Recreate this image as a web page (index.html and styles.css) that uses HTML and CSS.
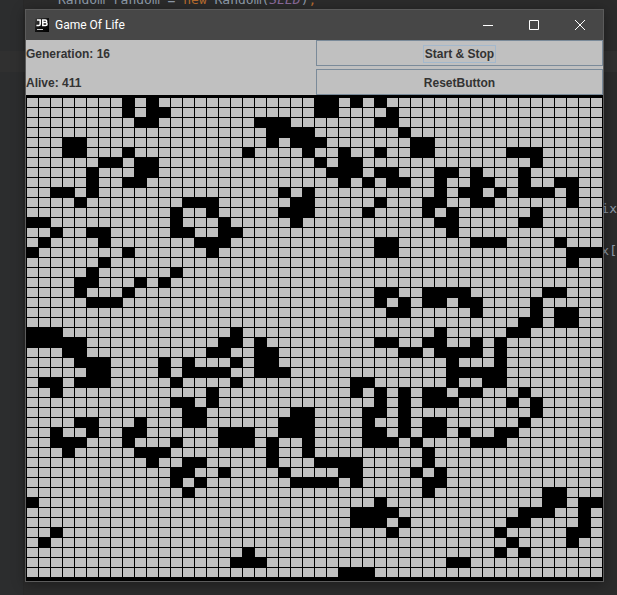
FILE: index.html
```html
<!DOCTYPE html>
<html lang="en">
<head>
<meta charset="utf-8">
<title>Game Of Life</title>
<link rel="stylesheet" href="styles.css">
</head>
<body>
<div class="editor" aria-hidden="true">
  <div class="gutter"></div>
  <div class="current-line"></div>
  <code class="code code-top">Random random = <span class="keyword">new</span> Random(<span class="constant">SEED</span>)<span class="keyword">;</span></code>
  <code class="code code-upper">ix</code>
  <code class="code code-lower">x[</code>
</div>
<main class="window">
  <header class="titlebar">
    <svg class="logo" viewBox="0 0 14 14" aria-hidden="true">
      <defs><linearGradient id="logo-fill" x1="0" y1="0" x2="1" y2="1"><stop offset="0" stop-color="#444"/><stop offset=".5" stop-color="#111"/><stop offset="1" stop-color="#000"/></linearGradient></defs>
      <rect width="14" height="14" fill="url(#logo-fill)"/>
      <path d="M2 2h3.2v4q0 1.5-1.4 1.5H1.4M7.8 7.5V2h2.5q1.4 0 1.4 1.3t-1.4 1.3H7.8h2.7q1.6 0 1.6 1.45t-1.6 1.45z" fill="none" stroke="#fff" stroke-width="1.5"/>
      <path d="M2 11.5h6" stroke="#ccc" stroke-width="1"/>
    </svg>
    <h1 class="title">Game Of Life</h1>
    <button class="control" type="button" aria-label="Minimize"><svg viewBox="0 0 10 10"><path d="M0 5.5h10"/></svg></button>
    <button class="control" type="button" aria-label="Maximize"><svg viewBox="0 0 10 10"><path d="M.5.5h9v9h-9z"/></svg></button>
    <button class="control" type="button" aria-label="Close"><svg viewBox="0 0 10 10"><path d="M0 0l10 10M10 0L0 10"/></svg></button>
  </header>
  <section class="panel">
    <p class="label">Generation: 16</p>
    <button class="action" type="button"><span class="focus">Start &amp; Stop</span></button>
    <p class="label">Alive: 411</p>
    <button class="action" type="button">ResetButton</button>
  </section>
  <div class="board" id="board" role="img" aria-label="Cells"></div>
</main>
<script src="board.js"></script>
</body>
</html>
```
FILE: styles.css
```css
* {
  box-sizing: border-box;
}

body {
  margin: 0;
  padding: 9px 13px 13px 25px;
  background: #2b2b2b;
  font-family: "Liberation Sans", Arial, sans-serif;
}

.editor {
  position: absolute;
  inset: 0;
  overflow: hidden;
}

.gutter {
  position: absolute;
  inset: 0 auto 0 0;
  width: 24px;
  background: #2c2d2e;
  border-right: 1px solid #292929;
}

.current-line {
  position: absolute;
  top: 51px;
  left: 0;
  right: 0;
  height: 21px;
  background: #303030;
}

.code {
  position: absolute;
  font: 13px/16px "DejaVu Sans Mono", monospace;
  color: #8d9aa8;
  white-space: pre;
}

.code-top {
  top: -8px;
  left: 58px;
}

.code-upper {
  top: 201px;
  right: 0;
}

.code-lower {
  top: 243px;
  right: 0;
}

.keyword {
  color: #b86c2e;
}

.constant {
  color: #8a6a9b;
  font-style: italic;
}

.window {
  position: relative;
  border: 1px solid #5b5b5b;
  background: #c0c0c0;
  box-shadow: 0 2px 12px rgba(0, 0, 0, 0.35);
}

.titlebar {
  display: flex;
  align-items: center;
  height: 30px;
  padding-left: 9px;
  background: #474747;
  color: #fff;
}

.logo {
  width: 14px;
  height: 14px;
}

.title {
  flex: 1;
  margin: 0 0 0 6px;
  font: 400 12px/16px Roboto, sans-serif;
}

.control {
  display: flex;
  align-items: center;
  justify-content: center;
  width: 46px;
  height: 28px;
  padding: 0;
  border: 0;
  background: none;
}

.control svg {
  width: 10px;
  height: 10px;
  fill: none;
  stroke: #fff;
  stroke-width: 1;
}

.panel {
  display: grid;
  grid-template-columns: 1fr 1fr;
  grid-auto-rows: 26px;
  gap: 3px;
  color: #333;
  font-size: 12px;
  font-weight: 700;
}

.label {
  margin: 0;
  line-height: 28px;
}

.action {
  padding: 2px 0 0;
  border: 1px solid #7a8a99;
  background: #c0c0c0;
  color: #333;
  font: inherit;
}

.focus {
  display: inline-block;
  padding: 1px;
  outline: 1px solid #a3b8cc;
}

.board {
  display: grid;
  grid-template-columns: repeat(48, 1fr);
  grid-auto-rows: 9px;
  gap: 1px;
  padding: 3px 1px 4px;
  background: #000;
}

.cell {
  background: #c0c0c0;
}

.alive {
  background: #000;
}
```
FILE: board.js
```js
const SIZE = 48;

// Columns of the living cells, one list for each row.
const rows = [
  [8, 10, 24, 25, 27, 29],
  [8, 10, 11, 24, 25, 30],
  [9, 10, 19, 20, 21, 29, 30],
  [20, 21, 22, 23, 31],
  [3, 4, 20, 22, 23, 24, 32, 33],
  [3, 4, 8, 18, 23, 26, 29, 32, 33, 40, 41, 42],
  [6, 7, 9, 10, 24, 26, 27, 42],
  [5, 9, 10, 25, 26, 27, 29, 30, 34, 35, 37, 41],
  [5, 8, 9, 26, 28, 30, 31, 34, 37, 38, 41, 44, 45],
  [2, 3, 5, 21, 23, 34, 36, 37, 39, 41, 42, 43, 45],
  [4, 13, 14, 15, 22, 23, 29, 33, 34, 37, 38, 45],
  [12, 15, 21, 22, 23, 28, 33, 35, 42],
  [0, 1, 12, 16, 22, 34, 35, 41, 42],
  [2, 5, 6, 12, 13, 16, 17, 35],
  [1, 6, 14, 15, 16, 29, 30, 37, 38, 39, 44],
  [0, 8, 15, 29, 30, 45, 46, 47],
  [6, 45],
  [5, 12],
  [4, 5, 9, 11],
  [4, 8, 29, 30, 33, 34, 35, 36, 43, 44],
  [5, 6, 7, 29, 31, 33, 34, 36, 37, 42],
  [30, 31, 37, 42, 44, 45],
  [41, 42, 44, 45],
  [0, 1, 2, 17, 34, 40, 41],
  [0, 1, 2, 3, 4, 16, 17, 19, 29, 30, 33, 34, 37, 39],
  [3, 4, 15, 16, 19, 20, 31, 32, 34, 35, 36, 37, 39],
  [4, 5, 6, 11, 13, 17, 19, 20, 35, 39],
  [5, 6, 11, 13, 14, 15, 16, 19, 20, 21, 35, 36, 37, 38, 39],
  [1, 2, 4, 5, 6, 12, 17, 27, 28, 35, 38, 39],
  [2, 15, 27, 29, 31, 33, 34, 36, 37, 41],
  [12, 13, 15, 29, 31, 33, 34, 35, 40, 42],
  [13, 14, 22, 23, 28, 29, 31, 42],
  [4, 5, 9, 13, 14, 21, 22, 23, 28, 31, 33, 34, 41],
  [2, 5, 8, 9, 16, 17, 18, 21, 22, 23, 28, 29, 31, 33, 34, 36, 39, 40],
  [2, 3, 4, 8, 12, 16, 17, 18, 20, 23, 28, 29, 30, 32, 37, 38, 39],
  [3, 9, 10, 11, 20, 23, 33],
  [10, 13, 14, 20, 24, 25, 26, 27, 33],
  [12, 13, 16, 21, 26, 27, 32, 34],
  [12, 14, 22, 23, 24, 25, 27, 33, 34],
  [13, 33, 43, 44],
  [0, 29, 43, 44, 46, 47],
  [27, 28, 29, 30, 41, 42, 43, 46],
  [27, 28, 29, 31, 40, 41, 46],
  [2, 30, 39, 45, 46],
  [1, 40, 45],
  [18, 39, 41],
  [17, 18, 19, 35, 36],
  [26, 27, 28]
];

const board = document.getElementById("board");

for (let row = 0; row < SIZE; row++) {
  for (let column = 0; column < SIZE; column++) {
    const cell = document.createElement("div");
    cell.className = rows[row].includes(column) ? "cell alive" : "cell";
    board.append(cell);
  }
}
```
